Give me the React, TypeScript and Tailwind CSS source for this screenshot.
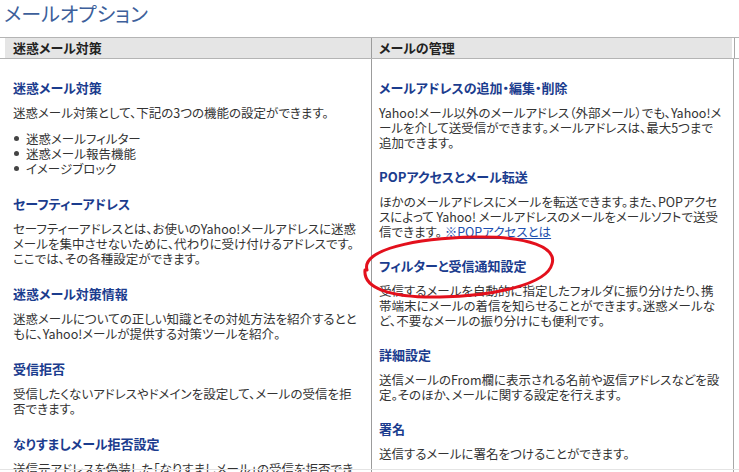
type Section = {
  title: string;
  lines: React.ReactNode[];
  bullets?: string[];
};

const left: Section[] = [
  {
    title: '迷惑メール対策',
    lines: ['迷惑メール対策として、下記の3つの機能の設定ができます。'],
    bullets: ['迷惑メールフィルター', '迷惑メール報告機能', 'イメージブロック'],
  },
  {
    title: 'セーフティーアドレス',
    lines: [
      'セーフティーアドレスとは、お使いのYahoo!メールアドレスに迷惑',
      'メールを集中させないために、代わりに受け付けるアドレスです。',
      'ここでは、その各種設定ができます。',
    ],
  },
  {
    title: '迷惑メール対策情報',
    lines: [
      '迷惑メールについての正しい知識とその対処方法を紹介するとと',
      'もに、Yahoo!メールが提供する対策ツールを紹介。',
    ],
  },
  {
    title: '受信拒否',
    lines: ['受信したくないアドレスやドメインを設定して、メールの受信を拒', '否できます。'],
  },
  {
    title: 'なりすましメール拒否設定',
    lines: ['送信元アドレスを偽装した「なりすましメール」の受信を拒否でき', 'ます。'],
  },
];

const right: Section[] = [
  {
    title: 'メールアドレスの追加・編集・削除',
    lines: [
      'Yahoo!メール以外のメールアドレス（外部メール）でも、Yahoo!メ',
      'ールを介して送受信ができます。メールアドレスは、最大5つまで',
      '追加できます。',
    ],
  },
  {
    title: 'POPアクセスとメール転送',
    lines: [
      'ほかのメールアドレスにメールを転送できます。また、POPアクセ',
      'スによって Yahoo! メールアドレスのメールをメールソフトで送受',
      <>
        信できます。 <a href="#" className="text-[#1d4fae] underline">※POPアクセスとは</a>
      </>,
    ],
  },
  {
    title: 'フィルターと受信通知設定',
    lines: [
      '受信するメールを自動的に指定したフォルダに振り分けたり、携',
      '帯端末にメールの着信を知らせることができます。迷惑メールな',
      'ど、不要なメールの振り分けにも便利です。',
    ],
  },
  {
    title: '詳細設定',
    lines: ['送信メールのFrom欄に表示される名前や返信アドレスなどを設', '定。そのほか、メールに関する設定を行えます。'],
  },
  {
    title: '署名',
    lines: ['送信するメールに署名をつけることができます。'],
  },
];

function Block({ s, gap }: { s: Section; gap: string }) {
  return (
    <div className={gap}>
      <h3 className="text-[13px] leading-[15px] font-bold text-[#1b3c8e] mb-[10px] whitespace-nowrap">{s.title}</h3>
      <p className="text-[12.5px] leading-[15px] text-[#333]">
        {s.lines.map((l, i) => (
          <span key={i} className="block whitespace-nowrap">
            {l}
          </span>
        ))}
      </p>
      {s.bullets && (
        <ul className="mt-[11px] text-[12.5px] leading-[15px] text-[#333]">
          {s.bullets.map((b) => (
            <li key={b} className="flex items-center">
              <span className="w-[5px] h-[5px] rounded-full bg-[#444] ml-[1px] mr-[7px]" />
              {b}
            </li>
          ))}
        </ul>
      )}
    </div>
  );
}

export default function App() {
  return (
    <div
      className="relative w-[739px] h-[472px] overflow-hidden bg-white [font-feature-settings:'palt']"
      style={{ fontFamily: '"Noto Sans CJK JP", "Noto Sans", sans-serif' }}
    >
      <h1 className="h-[37px] pl-[4px] pt-[2px] text-[20px] leading-[24px] text-[#3d5f9b]">メールオプション</h1>

      {/* header row */}
      <div className="flex h-[22px] border-y border-[#b4b4b4] pl-[5px] text-[13px] font-bold text-[#222]">
        <div className="w-[366px] bg-[#e5e5e5] pl-[8px] leading-[20px]">迷惑メール対策</div>
        <div className="w-px bg-[#9c9c9c]" />
        <div className="w-[360px] bg-[#e5e5e5] pl-[7px] leading-[20px]">メールの管理</div>
        <div className="w-[2px]" />
        <div className="w-px bg-[#a8a8a8]" />
      </div>

      {/* content */}
      <div className="flex">
        <div className="w-[371px] pl-[13px] pt-[21px]">
          {left.map((s) => (
            <Block key={s.title} s={s} gap="mb-[20px]" />
          ))}
        </div>
        <div className="w-[363px] h-[414px] border-l border-r border-l-[#9c9c9c] border-r-[#a8a8a8] pl-[7px] pt-[21px]">
          {right.map((s) => (
            <Block key={s.title} s={s} gap="mb-[19px]" />
          ))}
        </div>
      </div>

      <div className="absolute left-0 right-0 top-[469px] h-px bg-[#e4e4e4]" />

      {/* hand drawn highlight */}
      <svg className="absolute left-[355px] top-[228px]" width="210" height="80" viewBox="0 0 210 80">
        <path
          d="M12 42 C 6 22, 60 10, 120 9 C 175 8, 202 20, 197 36 C 192 56, 140 68, 85 69 C 35 70, 8 60, 10 42"
          fill="none"
          stroke="#e3101c"
          strokeWidth="3"
          strokeLinecap="round"
        />
      </svg>
    </div>
  );
}
